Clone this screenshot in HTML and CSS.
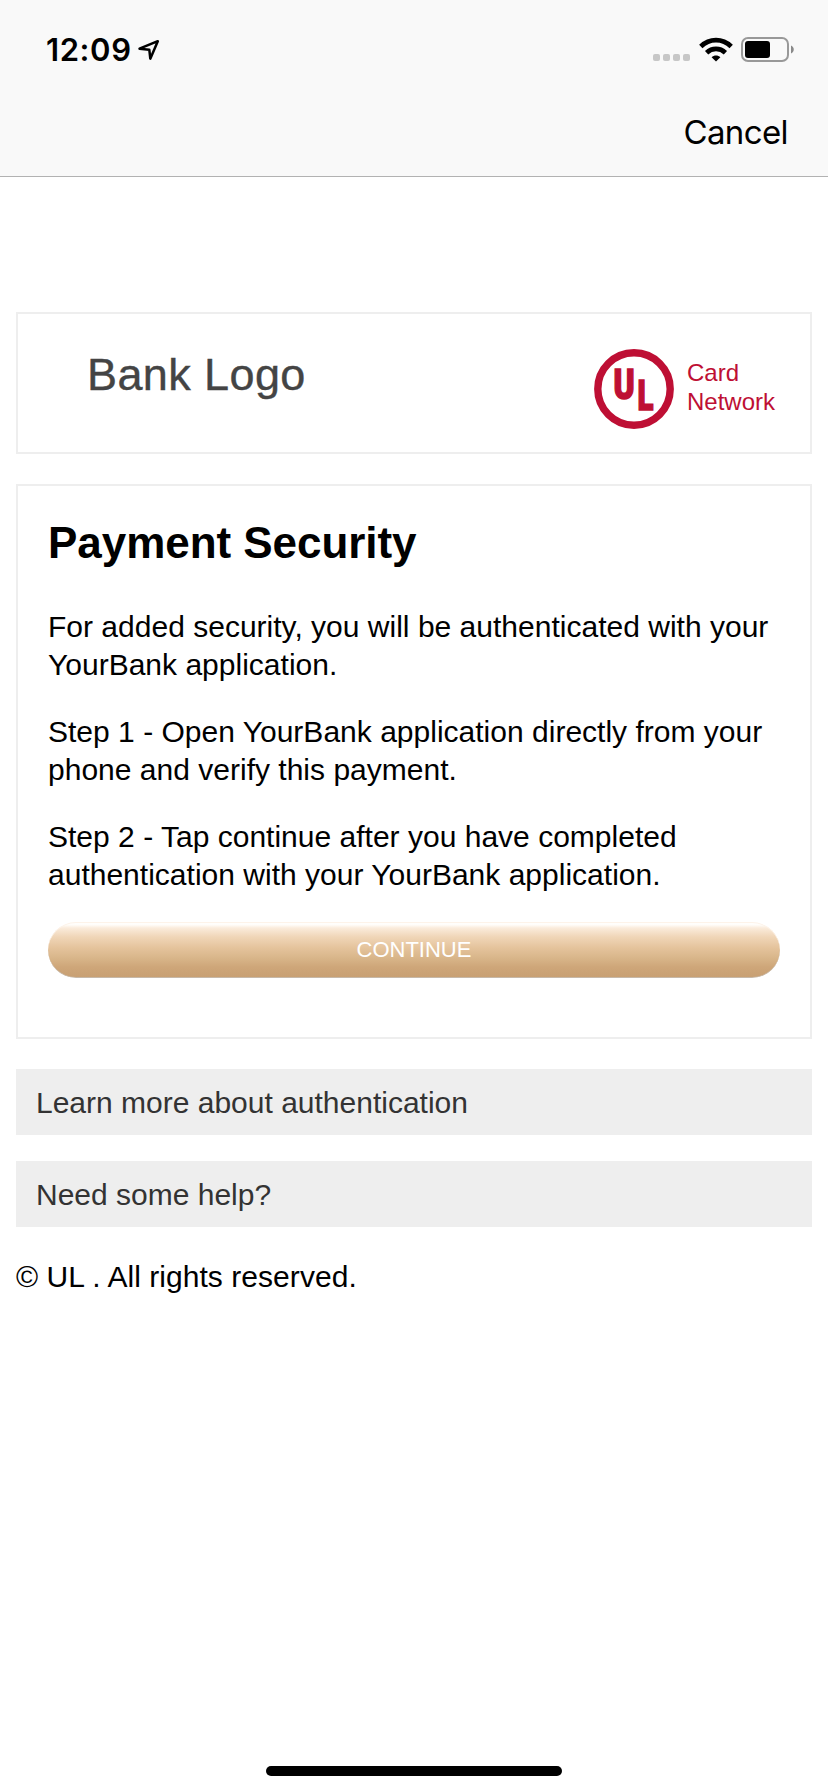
FILE: index.html
```html
<!DOCTYPE html>
<html lang="en">
<head>
<meta charset="utf-8">
<title>Payment Security</title>
<link rel="stylesheet" href="styles.css">
</head>
<body>
<header class="top">
  <div class="status">
    <div class="clock"><span class="time">12:09</span>
      <svg class="loc" width="24" height="24" viewBox="0 0 24 24"><path d="M2.5 10.7 20.8 3.2 13.3 20.7 12.3 11.7Z" fill="none" stroke="#000" stroke-width="2.5" stroke-linejoin="round"/></svg>
    </div>
    <div class="indicators">
      <div class="dots"><i></i><i></i><i></i><i></i></div>
      <svg class="wifi" width="34" height="26" viewBox="0 0 34 26">
        <g fill="none" stroke="#000" stroke-width="4.8"><path d="M1.8 9.4C10.5 1 23.5 1 32.2 9.4"/><path d="M7.6 15.7C13 10.7 21 10.7 26.4 15.7"/></g>
        <path d="M12.6 20.3C15 18 19 18 21.4 20.3L17 24.6Z"/>
      </svg>
      <svg class="battery" width="54" height="26" viewBox="0 0 54 26">
        <rect x="1" y="1" width="46" height="23" rx="6" fill="none" stroke="#999" stroke-width="2"/>
        <rect x="4" y="4" width="25" height="17" rx="3"/>
        <path d="M50 8.5C53.7 10 53.7 15 50 16.5Z" fill="#8a8a8a"/>
      </svg>
    </div>
  </div>
  <div class="nav"><span class="cancel">Cancel</span></div>
</header>
<main class="page">
  <section class="logos">
    <div class="bank">Bank Logo</div>
    <div class="network">
      <svg class="ul" width="80" height="80" viewBox="0 0 80 80">
        <circle cx="40" cy="40" r="36.2" fill="#fff" stroke="#be0f34" stroke-width="7.4"/>
        <g class="ul-text"><text transform="translate(19.4 50) scale(.76 1)">U</text><text transform="translate(43.4 61.2) scale(.7 1)">L</text></g>
      </svg>
      <div class="network-name">Card<br>Network</div>
    </div>
  </section>
  <section class="card">
    <h1>Payment Security</h1>
    <p>For added security, you will be authenticated with your<br>YourBank application.</p>
    <p>Step 1 - Open YourBank application directly from your<br>phone and verify this payment.</p>
    <p>Step 2 - Tap continue after you have completed<br>authentication with your YourBank application.</p>
    <button class="continue">CONTINUE</button>
  </section>
  <div class="bar">Learn more about authentication</div>
  <div class="bar">Need some help?</div>
  <footer class="legal">© UL . All rights reserved.</footer>
</main>
<div class="home"></div>
</body>
</html>
```
FILE: styles.css
```css
* { box-sizing: border-box; }
body {
  margin: 0;
  height: 1792px;
  background: #fff;
  color: #000;
  font-family: "Liberation Sans", Arial, sans-serif;
  font-size: 30px;
  line-height: 38px;
  display: flex;
  flex-direction: column;
}
.top {
  height: 177px;
  background: #f9f9f9;
  border-bottom: 1px solid #b2b2b2;
  font-family: Inter, sans-serif;
}
.status {
  height: 88px;
  display: flex;
  justify-content: space-between;
  padding: 30px 33px 0 46px;
}
.clock { display: flex; }
.time { width: 91px; font-size: 31px; font-weight: 600; line-height: 40px; letter-spacing: 0.6px; white-space: nowrap; }
.loc { margin-top: 8px; }
.indicators { display: flex; align-items: flex-start; margin-top: 7px; }
.dots { display: flex; gap: 3px; margin: 17px 9px 0 0; }
.dots i { width: 7px; height: 7px; border-radius: 2px; background: #c7c7c7; }
.battery { margin-left: 8px; }
.nav { display: flex; justify-content: flex-end; padding: 24px 40px 0 0; }
.cancel { font-size: 33px; line-height: 40px; letter-spacing: -0.6px; }
.page { padding: 135px 16px 0; flex: 1; }
.logos {
  height: 142px;
  border: 2px solid #eee;
  display: flex;
  justify-content: space-between;
  padding: 34px 35px 0 69px;
}
.bank { font-size: 45px; line-height: 54px; color: #444; letter-spacing: 0.4px; -webkit-text-stroke: 0.4px #444; }
.network { display: flex; }
.ul { margin-top: 1px; }
.ul-text { font-family: Roboto, sans-serif; font-weight: 900; font-size: 42px; fill: #be0f34; stroke: #be0f34; stroke-width: 1.6px; }
.network-name { margin: 10px 0 0 13px; color: #be0f34; font-size: 24px; line-height: 29px; }
.card {
  height: 555px;
  margin-top: 30px;
  border: 2px solid #eee;
  padding: 32px 30px 0;
}
h1 { margin: 0 0 40px; font-size: 44px; line-height: 50px; letter-spacing: -0.05px; }
p { margin: 0 0 29px; white-space: nowrap; letter-spacing: 0.01px; }
.continue {
  display: block;
  width: 100%;
  height: 56px;
  margin-top: -1px;
  border: 0;
  border-bottom: 1px solid #c6b8a8;
  border-radius: 28px;
  background: linear-gradient(#fff 0, #fffdfa 5%, #faebdb 11%, #f0d6b8 27%, #e5c49d 46%, #d8b589 66%, #cea679 82%, #c8a073 100%);
  box-shadow: inset 0 1px 0 #fdf3e9;
  color: #fff;
  font: 22px/53px "Liberation Sans", Arial, sans-serif;
  padding: 0 0 1px;
}
.bar {
  height: 66px;
  margin-top: 30px;
  padding: 15px 20px 0;
  background: #eee;
  color: #333;
}
.bar + .bar { margin-top: 26px; }
.legal { margin-top: 31px; letter-spacing: 0.05px; }
.home { width: 296px; height: 10px; border-radius: 5px; background: #000; margin: 0 auto 16px; }
```
